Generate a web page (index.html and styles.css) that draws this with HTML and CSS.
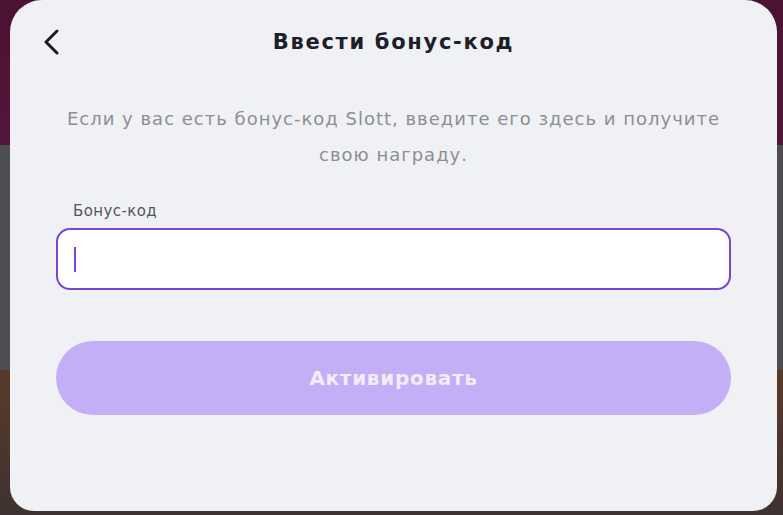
FILE: index.html
```html
<!DOCTYPE html>
<html>
<head>
    <title>Ввести бонус-код</title>
    <link rel="stylesheet" href="styles.css">
</head>
<body>
    <div class="backdrop">
        <div class="modal">
            <div class="modal-header">
                <button class="back" aria-label="Назад">
                    <svg width="18" height="26" viewBox="0 0 18 26">
                        <path d="M15 2 L4 13 L15 24" fill="none" stroke="#1c1c28" stroke-width="3" stroke-linecap="round" stroke-linejoin="round"/>
                    </svg>
                </button>
                <h1 class="title">Ввести бонус-код</h1>
                <span></span>
            </div>
            <p class="intro">Если у вас есть бонус-код Slott, введите его здесь и получите свою награду.</p>
            <label class="field-label">Бонус-код</label>
            <div class="field"><span class="caret"></span></div>
            <button class="activate">Активировать</button>
        </div>
    </div>
</body>
</html>
```

FILE: styles.css
```css
body {
    margin: 0;
    font-family: 'DejaVu Sans', 'Noto Sans', sans-serif;
}

.backdrop {
    height: 515px;
    box-sizing: border-box;
    padding: 0 6px 4px 10px;
    background: linear-gradient(to bottom, #4c1232 0, #52163a 145px, #4d4d53 145px, #4d4d53 370px, #5a3a2a 370px, #3e3230 515px);
}

.modal {
    height: 100%;
    box-sizing: border-box;
    background-color: #f0f1f5;
    border-radius: 32px 32px 24px 24px;
    padding: 0 46px;
    display: flex;
    flex-direction: column;
}

.modal-header {
    height: 84px;
    display: grid;
    grid-template-columns: 1fr auto 1fr;
    align-items: center;
    margin: 0 -46px;
    padding: 0 32px;
}

.back {
    background: none;
    border: none;
    padding: 0;
    width: 18px;
    height: 26px;
    cursor: pointer;
}

.title {
    margin: 0;
    font-size: 21px;
    font-weight: 600;
    letter-spacing: 1.7px;
    color: #1e1e2a;
}

.intro {
    margin: 17px 0 0;
    font-size: 18px;
    line-height: 36px;
    letter-spacing: 1px;
    color: #8e8e94;
    text-align: center;
    padding: 0 4px;
}

.field-label {
    margin-top: 29px;
    padding-left: 17px;
    font-size: 15px;
    line-height: 18px;
    letter-spacing: 0.4px;
    color: #55555c;
}

.field {
    margin-top: 8px;
    height: 62px;
    box-sizing: border-box;
    background-color: #fff;
    border: 2px solid #7a44d6;
    border-radius: 14px;
    display: flex;
    align-items: center;
    padding-left: 16px;
}

.caret {
    width: 2px;
    height: 25px;
    background-color: #7a44d6;
}

.activate {
    margin-top: 51px;
    height: 74px;
    border: none;
    border-radius: 37px;
    background-color: #c4aef5;
    color: #f2ecfd;
    font-family: inherit;
    font-size: 20px;
    font-weight: 600;
    letter-spacing: 0.7px;
    cursor: pointer;
}
```
